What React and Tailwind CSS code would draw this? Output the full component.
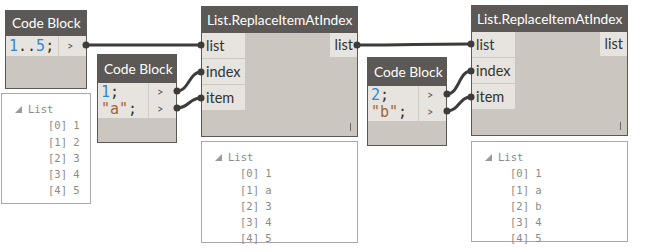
import React from "react";

const ui = "font-['Lato','Open_Sans',sans-serif]";
const mono = "font-['DejaVu_Sans_Mono','Liberation_Mono',monospace]";

const Num = ({ children }) => <span className="text-[#2f86dc]">{children}</span>;
const Str = ({ children }) => <span className="text-[#a4643a]">{children}</span>;

function CodeBlock({ className, headerClass, rowClass, lines }) {
  return (
    <div className={`absolute flex flex-col border border-[#5b5855] bg-[#cbc7c0] ${className}`}>
      <div
        className={`flex items-center whitespace-nowrap bg-[#5b5855] pl-[6px] text-[13.75px] text-white ${ui} ${headerClass}`}
      >
        Code Block
      </div>
      {lines.map((line, i) => (
        <div key={i} className={`flex bg-[#e7e4e0] ${rowClass}`}>
          <div className={`flex flex-1 items-center pl-[3px] text-[15px] text-[#333] ${mono}`}>
            {line}
          </div>
          <div
            className={`flex w-[28px] items-center border-l border-[#cfcbc5] pl-[8px] text-[11px] text-[#555] ${ui}`}
          >
            &gt;
          </div>
        </div>
      ))}
    </div>
  );
}

function ReplaceNode({ className }) {
  return (
    <div
      className={`absolute flex h-[131px] w-[157px] flex-col border border-[#5b5855] bg-[#cbc7c0] ${className}`}
    >
      <div
        className={`flex h-[26px] items-center whitespace-nowrap bg-[#5b5855] pl-[5px] text-[13.75px] text-white ${ui}`}
      >
        List.ReplaceItemAtIndex
      </div>
      <div className="flex flex-1 justify-between">
        <div className="flex flex-col gap-[1px]">
          {["list", "index", "item"].map((p) => (
            <div
              key={p}
              className={`flex h-[25px] w-[43px] items-center bg-[#e7e4e0] pl-[4px] text-[14.5px] text-[#333] ${ui}`}
            >
              {p}
            </div>
          ))}
        </div>
        <div className="flex flex-col items-end justify-between">
          <div
            className={`flex h-[24px] w-[27px] items-center justify-end bg-[#e7e4e0] pr-[4px] text-[14.5px] text-[#333] ${ui}`}
          >
            list
          </div>
          <div className="mb-[5px] mr-[6px] h-[8px] w-[1px] bg-[#666]" />
        </div>
      </div>
    </div>
  );
}

function Watch({ className, items, indentClass }) {
  return (
    <div
      className={`absolute border border-[#a8a8a8] bg-white pt-[7px] text-[10.5px] leading-[16.3px] text-[#8a8a8a] ${mono} ${className}`}
    >
      <div className="flex items-center pl-[13px]">
        <svg width="7" height="7" viewBox="0 0 7 7" className="mr-[6px]">
          <polygon points="7,0 7,7 0,7" fill="#9a9a9a" />
        </svg>
        List
      </div>
      {items.map((v, i) => (
        <div key={i} className={indentClass}>
          [{i}] {v}
        </div>
      ))}
    </div>
  );
}

const wire = (x1, y1, x2, y2) => {
  const dx = Math.max(10, (x2 - x1) * 0.5);
  return `M${x1} ${y1} C${x1 + dx} ${y1}, ${x2 - dx} ${y2}, ${x2} ${y2}`;
};

const wires = [
  [86, 45, 201, 45],
  [177, 91, 201, 72],
  [177, 108, 201, 98],
  [357, 45, 471, 44],
  [447, 94, 471, 71],
  [447, 111, 471, 97],
];

export default function App() {
  return (
    <div className="relative h-[252px] w-[654px] overflow-hidden bg-white">
      <CodeBlock
        className="left-[5px] top-[10px] h-[79px] w-[82px]"
        headerClass="h-[25px]"
        rowClass="h-[20px]"
        lines={[
          <>
            <Num>1</Num>..<Num>5</Num>;
          </>,
        ]}
      />
      <Watch
        className="left-[1px] top-[93px] h-[111px] w-[90px]"
        items={[1, 2, 3, 4, 5]}
        indentClass="pl-[46px]"
      />

      <CodeBlock
        className="left-[97px] top-[54px] h-[89px] w-[80px]"
        headerClass="h-[28px]"
        rowClass="h-[17.5px]"
        lines={[
          <>
            <Num>1</Num>;
          </>,
          <>
            <Str>"a"</Str>;
          </>,
        ]}
      />

      <ReplaceNode className="left-[201px] top-[6px]" />
      <Watch
        className="left-[201px] top-[141px] h-[102px] w-[157px]"
        items={[1, "a", 3, 4, 5]}
        indentClass="pl-[38px]"
      />

      <CodeBlock
        className="left-[367px] top-[57px] h-[89px] w-[80px]"
        headerClass="h-[28px]"
        rowClass="h-[17.5px]"
        lines={[
          <>
            <Num>2</Num>;
          </>,
          <>
            <Str>"b"</Str>;
          </>,
        ]}
      />

      <ReplaceNode className="left-[471px] top-[5px]" />
      <Watch
        className="left-[471px] top-[141px] h-[101px] w-[157px]"
        items={[1, "a", "b", 4, 5]}
        indentClass="pl-[38px]"
      />

      <svg className="pointer-events-none absolute left-0 top-0" width="654" height="252">
        {wires.map(([x1, y1, x2, y2], i) => (
          <g key={i}>
            <path d={wire(x1, y1, x2, y2)} stroke="#3e3c3a" strokeWidth="3" fill="none" />
            <circle cx={x1} cy={y1} r="3.5" fill="#3e3c3a" />
            <circle cx={x2} cy={y2} r="3.5" fill="#3e3c3a" />
          </g>
        ))}
      </svg>
    </div>
  );
}
